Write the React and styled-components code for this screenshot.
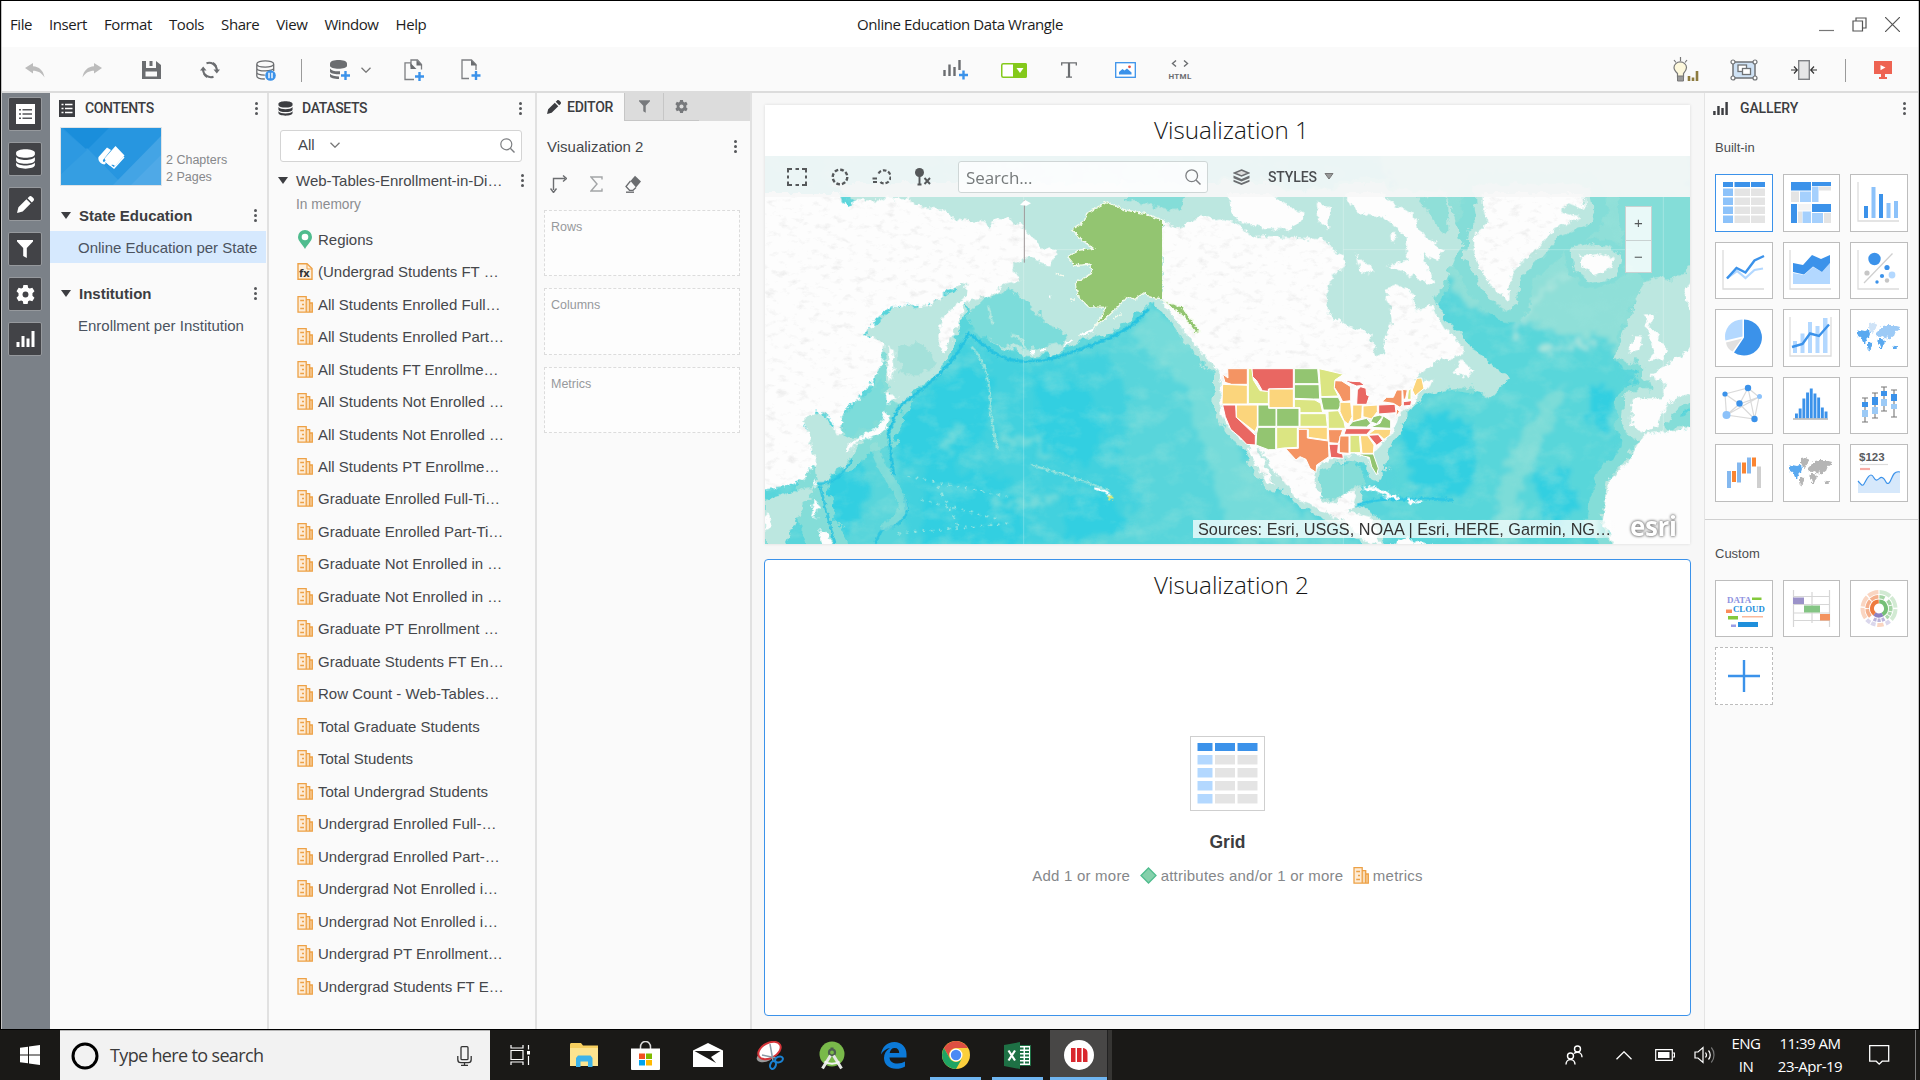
import React from "react";
import styled, { createGlobalStyle, css } from "styled-components";

const UI = `"Liberation Sans", Arial, sans-serif`;
const HEAD = `Roboto, "Liberation Sans", sans-serif`;
const SEGOE = `"Open Sans", "Noto Sans", sans-serif`;

const BLUE = "#3b92ea";
const LIGHT = "#b3d8ff";
const GREY = "#e4e4e4";
const INK = "#6b6d70";

const GlobalStyle = createGlobalStyle`
  *, *::before, *::after { box-sizing: border-box; }
  html, body { margin: 0; padding: 0; }
  body { width: 1920px; height: 1080px; overflow: hidden; background: #fafafa; }
  svg { display: block; flex: none; }
`;

/* ---------- shell ---------- */

const Screen = styled.div`
  width: 1920px;
  height: 1080px;
  display: flex;
  flex-direction: column;
  font-family: ${UI};
  font-size: 15px;
  color: #45474b;
`;

const AppWindow = styled.div`
  height: 1029px;
  display: flex;
  flex-direction: column;
  border: 1px solid #000;
  border-bottom: 0;
  box-shadow: inset 1px 0 0 #c4c4c4, inset -1px 0 0 #c4c4c4;
  padding: 0 1px;
  background: #fafafa;
`;

const MenuBar = styled.header`
  flex: none;
  height: 46px;
  display: grid;
  grid-template-columns: 1fr auto 1fr;
  align-items: center;
  background: #fff;
  font-family: ${SEGOE};
  font-size: 15px;
  letter-spacing: -0.42px;
  color: #1d1d1d;
`;

const MenuItems = styled.nav`
  display: flex;
  gap: 17px;
  padding-left: 8px;
`;

const WindowControls = styled.div`
  display: flex;
  justify-content: flex-end;
  align-items: center;
  gap: 18px;
  padding-right: 18px;
`;

const Toolbar = styled.div`
  flex: none;
  height: 46px;
  display: flex;
  align-items: center;
  padding-top: 2px;
  background: #fafafa;
  border-bottom: 2px solid #dcdcdc;
`;

const ToolGroup = styled.div`
  display: flex;
  align-items: center;
  height: 100%;
  margin-left: ${(p) => p.$ml || 0}px;
`;

const Tool = styled.div`
  width: ${(p) => p.$w}px;
  height: 30px;
  margin-left: ${(p) => p.$ml || 0}px;
  display: flex;
  flex-direction: column;
  align-items: center;
  justify-content: center;
`;

const ToolDivider = styled.div`
  width: 1px;
  height: 23px;
  margin-left: ${(p) => p.$ml}px;
  background: #9a9a9a;
`;

const HtmlLabel = styled.span`
  font-family: ${HEAD};
  font-weight: 700;
  font-size: 8px;
  line-height: 8px;
  letter-spacing: 0.3px;
  color: ${INK};
  margin-top: 6px;
`;

const Workspace = styled.div`
  flex: 1;
  min-height: 0;
  display: flex;
`;

const Rail = styled.aside`
  width: 48px;
  flex: none;
  background: #7b8188;
  padding: 4px 0 0 6px;
  display: flex;
  flex-direction: column;
  gap: 11px;
`;

const RailButton = styled.div`
  width: 34px;
  height: 34px;
  display: flex;
  align-items: center;
  justify-content: center;
  background: #424347;
  border: 1px solid #96999d;
  border-radius: 2px;
`;

/* ---------- side panels ---------- */

const Panel = styled.section`
  width: ${(p) => p.$w}px;
  flex: none;
  display: flex;
  flex-direction: column;
  background: #fafafa;
  border-right: 2px solid #e1e1e1;
`;

const PanelHead = styled.div`
  flex: none;
  height: 30px;
  display: flex;
  align-items: center;
  padding: 0 ${(p) => p.$pr}px 0 ${(p) => p.$pl ?? 9}px;
  font-family: ${HEAD};
  font-weight: 500;
  font-size: 14px;
  letter-spacing: ${(p) => p.$ls ?? -0.35}px;
  color: #3c3d41;
`;

const PanelTitle = styled.span`
  margin-left: ${(p) => p.$ml ?? 10}px;
  flex: 1;
`;

const DotsColumn = styled.div`
  width: 3px;
  display: flex;
  flex-direction: column;
  gap: 2px;
  i {
    width: 3px;
    height: 3px;
    border-radius: 50%;
    background: #55575a;
  }
`;
const Dots = () => (
  <DotsColumn>
    <i />
    <i />
    <i />
  </DotsColumn>
);

const Dossier = styled.div`
  height: 66px;
  margin-top: 4px;
  padding-left: 10px;
  display: flex;
`;

const Thumb = styled.div`
  width: 102px;
  height: 59px;
  border: 1px solid #dfe3e6;
`;

const DossierInfo = styled.div`
  margin: 25px 0 0 4px;
  font-size: 12.5px;
  line-height: 17px;
  color: #86888b;
`;

const ChapterRow = styled.div`
  height: 30px;
  margin-top: ${(p) => p.$mt || 0}px;
  padding: 0 10px 0 11px;
  display: flex;
  align-items: center;
  font-weight: 700;
  color: #3c3d41;
  span {
    flex: 1;
    margin-left: 8px;
  }
`;

const PageRow = styled.div`
  height: 32px;
  line-height: 34px;
  margin-top: 1px;
  padding-left: 28px;
  width: 216px;
  white-space: nowrap;
  color: #4b5360;
  background: ${(p) => (p.$active ? "#d6e9fe" : "transparent")};
`;

const Caret = styled.div`
  width: 0;
  height: 0;
  border: 5px solid transparent;
  border-top: 7px solid #3c3d41;
  border-bottom: 0;
`;

const SearchBox = styled.div`
  flex: none;
  width: 242px;
  height: 32px;
  margin: 7px 0 0 11px;
  padding: 0 6px 2px 17px;
  display: flex;
  align-items: center;
  background: #fff;
  border: 1px solid #d4d4d4;
  border-radius: 3px;
  span {
    margin: -2px 15px 0 0;
  }
`;

const Spring = styled.div`
  flex: 1;
`;

const DatasetRow = styled.div`
  margin-top: 6px;
  height: 24px;
  padding: 0 11px 0 9px;
  display: flex;
  align-items: center;
  span {
    flex: 1;
    margin-left: 8px;
    white-space: nowrap;
  }
`;

const DatasetNote = styled.div`
  height: 24px;
  line-height: 26px;
  padding-left: 27px;
  font-size: 13.75px;
  color: #8b8d90;
`;

const FieldList = styled.div`
  margin-top: 7px;
  padding-left: 28px;
`;

const FieldRow = styled.div`
  height: 32.48px;
  display: flex;
  align-items: center;
  white-space: nowrap;
  color: #45474b;
`;

const FieldIcon = styled.div`
  width: 16px;
  height: 20px;
  margin-right: 5px;
  display: flex;
  align-items: center;
  justify-content: center;
`;

/* ---------- editor ---------- */

const Tabs = styled.div`
  display: flex;
  height: 28px;
  background: #dcdcdc;
`;

const EditorTab = styled.div`
  width: 87px;
  padding-left: 10px;
  display: flex;
  align-items: center;
  background: #fafafa;
  font-family: ${HEAD};
  font-weight: 500;
  font-size: 14px;
  letter-spacing: -0.25px;
  color: #3c3d41;
  span {
    margin-left: 6px;
  }
`;

const IconTab = styled.div`
  width: ${(p) => p.$w}px;
  display: flex;
  align-items: center;
  justify-content: center;
  border-left: 1px solid #c6c6c6;
  border-bottom: 1px solid #c6c6c6;
`;

const VizName = styled.div`
  height: 30px;
  margin-top: 10px;
  padding: 0 13px 0 10px;
  display: flex;
  align-items: center;
  span {
    flex: 1;
  }
`;

const EditorTools = styled.div`
  height: 28px;
  margin-top: 9px;
  padding-left: 13px;
  display: flex;
  align-items: center;
  gap: 22.5px;
`;

const DropZones = styled.div`
  margin: 12px 0 0 7px;
  display: flex;
  flex-direction: column;
  gap: 12px;
`;

const DropZone = styled.div`
  width: 196px;
  height: 66.4px;
  padding: 8px 6px;
  background: #fdfdfd;
  border: 1px dashed #dcdcdc;
  font-size: 12.5px;
  line-height: 16px;
  color: #97999c;
`;

/* ---------- canvas ---------- */

const Canvas = styled.main`
  flex: 1;
  min-width: 0;
  padding: 12px 13px 0 12px;
  display: flex;
  flex-direction: column;
  gap: 15px;
  background: #f7f7f7;
`;

const VizCard = styled.article`
  flex: none;
  height: ${(p) => p.$h}px;
  background: #fff;
  display: flex;
  flex-direction: column;
  ${(p) =>
    p.$selected
      ? css`
          border: 1.5px solid ${BLUE};
          border-radius: 4px;
        `
      : css`
          margin: 0 1px;
          box-shadow: 0 0 3px rgba(0, 0, 0, 0.12);
        `}
`;

const VizTitle = styled.h2`
  flex: none;
  margin: 0;
  height: 51px;
  line-height: 50px;
  padding-left: 8px;
  text-align: center;
  font-family: ${SEGOE};
  font-weight: 300;
  font-size: 24.2px;
  color: #151515;
`;

const MapArea = styled.div`
  position: relative;
  height: 388px;
  overflow: hidden;
`;

const MapBar = styled.div`
  position: absolute;
  inset: 0 0 auto 0;
  height: 41px;
  padding-left: 22px;
  display: flex;
  align-items: center;
  background: rgba(247, 247, 247, 0.92);
`;

const MapTool = styled.div`
  width: 20px;
  margin-right: ${(p) => p.$mr}px;
  display: flex;
  justify-content: center;
`;

const MapSearch = styled.div`
  width: 250px;
  height: 32px;
  margin: 1px 25px 0 1px;
  padding: 0 6px 0 7px;
  display: flex;
  align-items: center;
  justify-content: space-between;
  background: rgba(255, 255, 255, 0.72);
  border: 1px solid #cfd6d6;
  border-radius: 3px;
  font-family: ${SEGOE};
  font-size: 17px;
  letter-spacing: -0.1px;
  color: #767a7b;
`;

const StylesLabel = styled.span`
  margin: 1px 7px 0 18px;
  font-family: ${HEAD};
  font-weight: 500;
  font-size: 14px;
  letter-spacing: -0.15px;
  color: #4b4d50;
`;

const ZoomControl = styled.div`
  position: absolute;
  left: 860px;
  top: 50px;
  width: 27px;
  height: 67px;
  border: 1px solid #c9d2d2;
  background: rgba(255, 255, 255, 0.82);
  div {
    height: 33px;
    line-height: 32px;
    text-align: center;
    font-size: 15px;
    color: #55595a;
  }
  div + div {
    border-top: 1px solid #c9d2d2;
  }
`;

const Credits = styled.div`
  position: absolute;
  left: 428px;
  top: 364px;
  width: 423px;
  height: 18px;
  padding-left: 5px;
  line-height: 19px;
  font-size: 16.25px;
  white-space: nowrap;
  background: linear-gradient(90deg, rgba(255, 255, 255, 0.74) 95%, rgba(255, 255, 255, 0.2));
  color: #333;
`;

const EsriMark = styled.div`
  position: absolute;
  left: 865px;
  top: 355px;
  display: flex;
  font-family: "Open Sans", sans-serif;
  font-weight: 700;
  font-size: 26px;
  line-height: 30px;
  letter-spacing: -0.4px;
  color: #fff;
  text-shadow: 0 0 3px #777, 0 0 3px #888, 0 0 1px #999;
`;

const EmptyState = styled.div`
  flex: 1;
  display: flex;
  flex-direction: column;
  align-items: center;
  padding-top: 125px;
`;

const EmptyIcon = styled.div`
  width: 75px;
  height: 75px;
  border: 1px solid #cfcfcf;
  padding: 6px;
`;

const EmptyTitle = styled.div`
  margin-top: 20px;
  font-weight: 700;
  font-size: 17.5px;
  line-height: 22px;
  color: #3c3d41;
`;

const EmptyHint = styled.div`
  margin-top: 11px;
  height: 22px;
  display: flex;
  align-items: center;
  letter-spacing: 0.22px;
  color: #85878a;
  svg {
    margin: 0 3.5px 0 10px;
  }
`;

/* ---------- gallery ---------- */

const Gallery = styled.section`
  width: 214px;
  flex: none;
  background: #fafafa;
  border-left: 1px solid #e4e4e4;
`;

const GalleryLabel = styled.div`
  height: ${(p) => p.$h}px;
  padding: ${(p) => p.$pt}px 0 0 10px;
  line-height: 18px;
  font-size: 13px;
  color: #4b4d50;
`;

const TileGrid = styled.div`
  padding-left: 10px;
  display: grid;
  grid-template-columns: repeat(3, 57.5px);
  grid-auto-rows: 57.5px;
  gap: 10px;
`;

const Tile = styled.div`
  border: 1px ${(p) => (p.$dashed ? "dashed" : "solid")} ${(p) => (p.$active ? BLUE : "#bdbdbd")};
  background: #fff;
  display: flex;
  align-items: center;
  justify-content: center;
`;

const GalleryRule = styled.div`
  height: 1px;
  margin-top: 17px;
  background: #d0d0d0;
`;

/* ---------- taskbar ---------- */

const Taskbar = styled.footer`
  flex: 1;
  display: flex;
  background: #1a1917;
  border-top: 1px solid #000;
  color: #fff;
`;

const StartButton = styled.div`
  width: 60px;
  display: flex;
  align-items: center;
  justify-content: center;
`;

const TaskSearch = styled.div`
  width: 430px;
  padding: 0 18px 0 11px;
  display: flex;
  align-items: center;
  background: #f2f2f2;
  border-top: 1px solid #b5b5b5;
  font-family: ${SEGOE};
  font-size: 18px;
  letter-spacing: -0.65px;
  color: #3a3a3a;
  span {
    flex: 1;
    margin: -2px 0 0 11px;
  }
`;

const TaskApp = styled.div`
  width: ${(p) => p.$w || 62}px;
  display: flex;
  align-items: center;
  justify-content: center;
  background: ${(p) => (p.$active ? "#484746" : "transparent")};
  box-shadow: ${(p) => (p.$open ? "inset 0 -3px 0 #6fb5f0" : "none")};
  margin-left: ${(p) => p.$ml || 0}px;
`;

const Stacked = styled.div`
  width: 5px;
  background: #363533;
  border-left: 1px solid #222;
`;

const Tray = styled.div`
  display: flex;
  align-items: center;
  font-family: ${SEGOE};
  font-size: 15px;
  line-height: 23px;
  letter-spacing: -0.5px;
  text-align: center;
`;

const TrayItem = styled.div`
  width: ${(p) => p.$w}px;
  margin-left: ${(p) => p.$ml || 0}px;
  display: flex;
  justify-content: center;
`;

const PeekEdge = styled.div`
  width: 5px;
  margin-left: 25px;
  height: 100%;
  border-left: 1px solid #7d7d7d;
`;

/* ---------- icons ---------- */

const Svg = ({ w, h, vb, children, ...rest }) => (
  <svg width={w} height={h} viewBox={vb || `0 0 ${w} ${h}`} fill="none" {...rest}>
    {children}
  </svg>
);

const Undo = ({ flip }) => (
  <Svg w={20} h={15}>
    <path
      transform={flip ? "matrix(-1 0 0 1 20 0)" : undefined}
      d="M0 5 8 0v3.2C14 3.5 18.500 7.500 19.500 14.500 16.500 9.800 13 7.800 8 7.800V10.500z"
      fill="#bcbcbc"
    />
  </Svg>
);

const Save = () => (
  <Svg w={19} h={18}>
    <path d="M0 0h4v7h10V0l5 4v14H0z" fill={INK} />
    <path d="M7.500 0h3v5h-3z" fill={INK} />
    <path d="M3.500 10.500h11.500v5H3.500z" fill="#fafafa" />
  </Svg>
);

const Refresh = () => (
  <Svg w={20} h={18}>
    <path d="M6.500 2.200A8 8 0 0 1 17 9M13.500 15.800A8 8 0 0 1 3 9" stroke={INK} strokeWidth="2" />
    <path d="M13.500 8.500h6.500l-3.200 4zM0 9.500h6.500L3.200 5.500z" fill={INK} />
    <path d="M3.500 12.500c.8 1.800 2 3 3.500 3.800M16.500 5.500C15.700 3.700 14.500 2.500 13 1.700" stroke={INK} strokeWidth="1.400" />
  </Svg>
);

const DbPause = () => (
  <Svg w={20} h={21}>
    <path
      d="M.8 4c0-4.200 16.900-4.200 16.900 0s-16.900 4.200-16.900 0v12c0 2 3 3 8 3M17.700 4v7M.8 8.200c0 3.600 16.900 3.600 16.900 0M.8 12.300c0 2 4 2.800 8 2.800"
      stroke={INK}
      strokeWidth="1.300"
    />
    <circle cx="14.500" cy="15.500" r="5.300" fill={BLUE} />
    <path d="M13 12.800v5.400M16 12.800v5.400" stroke="#fff" strokeWidth="1.400" />
  </Svg>
);

const Plus = ({ x, y }) => <path d={`M${x - 4.500} ${y}h9M${x} ${y - 4.500}v9`} stroke={BLUE} strokeWidth="2.400" />;

const DbShape = ({ fill, gap }) => (
  <>
    <path d="M0 3.200C0-.8 16-.8 16 3.200v1.300c0 4-16 4-16 0z" fill={fill} />
    <path d={`M0 6.800c2 3.400 14 3.400 16 0v2.700c0 4-16 4-16 0z`} fill={fill} />
    <path d={`M0 ${11.500 + gap}c2 3.400 14 3.400 16 0v2.200c0 4-16 4-16 0z`} fill={fill} />
  </>
);

const DbPlus = () => (
  <Svg w={21} h={21}>
    <path d="M0 3.500c0-4.600 17-4.600 17 0v2.300c0 4-17 4-17 0z" fill={INK} />
    <path d="M0 8.500c1.500 2.500 6 3 10 2.700v3C5 14.500 0 13.500 0 11.500zM0 13.800c1.500 2 5 2.700 9 2.700v2.500c-5 0-9-1-9-2.700z" fill={INK} />
    <Plus x={15.500} y={15.500} />
  </Svg>
);

const Chevron = ({ w = 10, h = 6, c = "#8a8a8a", s = 1.300, up }) => (
  <Svg w={w} h={h}>
    <path
      d={up ? `M.5 ${h - 0.700} ${w / 2} .8 ${w - 0.500} ${h - 0.700}` : `M.5 .7 ${w / 2} ${h - 0.800} ${w - 0.500} .7`}
      stroke={c}
      strokeWidth={s}
    />
  </Svg>
);

const CopyPlus = () => (
  <Svg w={21} h={23}>
    <path d="M7 3.800H1V20.500h9" stroke="#7d7f82" strokeWidth="1.300" />
    <path d="M7 7.500V1h6.500l4 4.500v5" stroke="#7d7f82" strokeWidth="1.300" />
    <path d="M6.500 4l6 6h-6zM12.500 1v5.500h5.500z" fill={INK} />
    <Plus x={15.500} y={17.500} />
  </Svg>
);

const DocPlus = () => (
  <Svg w={21} h={22}>
    <path d="M8 19.500H1V1h9.500l4.500 4.500V11" stroke="#7d7f82" strokeWidth="1.300" />
    <path d="M10 1v5.500h6z" fill={INK} />
    <Plus x={15} y={16.500} />
  </Svg>
);

const ChartPlus = () => (
  <Svg w={26} h={21}>
    <path d="M1.500 10v6M6.500 4.500V16M11.500 7v9M16.500 0v10" stroke={INK} strokeWidth="2.400" />
    <Plus x={20.500} y={15} />
  </Svg>
);

const FilterBox = () => (
  <Svg w={26} h={15}>
    <rect x=".75" y=".75" width="24.500" height="13.500" rx="1.500" fill="#fff" stroke="#84c91b" strokeWidth="1.500" />
    <path d="M12 0h12a2 2 0 0 1 2 2v11a2 2 0 0 1-2 2H12z" fill="#84c91b" />
    <path d="M15.500 5h7L19 10z" fill="#fff" />
  </Svg>
);

const TextTool = () => (
  <Svg w={16} h={16}>
    <path d="M.7 3.500V.8h14.600v2.700M5 15.200h6" stroke={INK} strokeWidth="1.300" />
    <path d="M8 1v14" stroke={INK} strokeWidth="2.200" />
  </Svg>
);

const ImageTool = () => (
  <Svg w={21} h={16}>
    <rect x=".7" y=".7" width="19.600" height="14.600" fill="#fff" stroke={BLUE} strokeWidth="1.300" />
    <path d="M4 12.500V10l3.500-3 2 1.500 2.500-2 4.500 4v2z" fill={BLUE} />
    <circle cx="14.500" cy="4.800" r="1.400" fill="#e8503f" />
  </Svg>
);

const CodeTool = () => (
  <Svg w={18} h={7}>
    <path d="M5 .5 1.500 3.500 5 6.500M13 .5l3.500 3-3.500 3" stroke={INK} strokeWidth="1.400" />
  </Svg>
);

const Bulb = () => (
  <Svg w={26} h={26}>
    <path d="M7.500 0v4M1 3l2 2.500M14 3l-2 2.500" stroke="#777" strokeWidth="1.200" />
    <path d="M4.500 20v-3.500C2.500 14.500 1 13 1 10.500a6.200 5.500 0 0 1 12.500 0c0 2.500-1.500 4-3 6V20z" fill="#fdf8dc" stroke="#777" strokeWidth="1.200" />
    <path d="M4.500 19h6v5h-6z" fill="#999" stroke="#777" />
    <path d="M16 19v5M20 20.500V24M24 14v10" stroke="#8d7b3f" strokeWidth="2.600" />
  </Svg>
);

const GroupTool = () => (
  <Svg w={28} h={22}>
    <rect x="3" y="3" width="22" height="16" fill="#cfe2f5" stroke="#6f7275" strokeWidth="1.500" />
    <rect x="8" y="6" width="8.500" height="6.500" fill="#fff" stroke="#6f7275" strokeWidth="1.300" />
    <rect x="12.500" y="9.500" width="8" height="6" fill="#fff" stroke="#6f7275" strokeWidth="1.300" />
    {[
      [3, 3],
      [25, 3],
      [3, 19],
      [25, 19],
    ].map(([x, y]) => (
      <circle key={`${x}-${y}`} cx={x} cy={y} r="2" fill="#fff" stroke="#6f7275" strokeWidth="1.200" />
    ))}
  </Svg>
);

const FitTool = () => (
  <Svg w={26} h={20}>
    <rect x="7.700" y=".7" width="10.600" height="18.600" fill="#e7e7e7" stroke="#808285" strokeWidth="1.400" />
    <path d="M0 10h6M3 6.500 6.300 10 3 13.500M26 10h-6M23 6.500 19.700 10 23 13.500" stroke="#333" strokeWidth="1.200" />
  </Svg>
);

const Present = () => (
  <Svg w={18} h={18}>
    <path d="M0 0h18v13h-7v3h2v2H5v-2h2v-3H0z" fill="#ee6352" />
    <path d="M6.500 4v5.200l5-2.600z" fill="#fff" />
  </Svg>
);

const ListIcon = ({ light }) =>
  light ? (
    <Svg w={19} h={20}>
      <path d="M0 0h19v20H0z" fill="#fff" />
      <path d="M3 5.800h2M3 10h2M3 14.200h2M6.500 5.800H16M6.500 10H16M6.500 14.200H16" stroke="#55565a" strokeWidth="1.400" />
    </Svg>
  ) : (
    <Svg w={16} h={17}>
      <path d="M0 0h16v17H0z" fill="#3c3d41" />
      <path d="M2.500 4.500h2M2.500 8.500h2M2.500 12.500h2M6 4.500h7.500M6 8.500h7.500M6 12.500h7.500" stroke="#fff" strokeWidth="1.500" />
    </Svg>
  );

const Db = ({ w, h, fill }) => (
  <Svg w={w} h={h} vb="0 0 16 17">
    <DbShape fill={fill} gap={0} />
  </Svg>
);

const Pencil = ({ s, fill }) => (
  <Svg w={s} h={s} vb="0 0 18 18">
    <path d="M0 18l1.500-6L10 3.500 14.500 8 6 16.500zM11.200 2.300 13 .5c.8-.8 1.900-.6 2.800.2l1.500 1.500c.8.9 1 2 .2 2.800l-1.800 1.800z" fill={fill} />
  </Svg>
);

const Funnel = ({ w, h, fill }) => (
  <Svg w={w} h={h} vb="0 0 16 18">
    <path d="M0 0h16v1.500L9.800 8v10l-3.600-2V8L0 1.500z" fill={fill} />
  </Svg>
);

const Gear = ({ s, fill, hole }) => (
  <Svg w={s} h={s} vb="0 0 18 18">
    <path
      d="M7 0h4l.5 2.500 1.500.9 2.500-.9 2 3.500-1.900 1.700v2.600l1.900 1.700-2 3.500-2.500-.9-1.500.9L11 18H7l-.5-2.500-1.500-.9-2.500.9-2-3.500 1.900-1.700V7.700L.5 6l2-3.500 2.500.9 1.500-.9z"
      fill={fill}
    />
    <circle cx="9" cy="9" r="2.800" fill={hole} />
  </Svg>
);

const Bars = ({ w, h, fill }) => (
  <Svg w={w} h={h} vb="0 0 18 16">
    <path d="M0 11h3v5H0zM5 5h3v11H5zM10 7.500h3V16h-3zM15 0h3v16h-3z" fill={fill} />
  </Svg>
);

const Magnifier = ({ s = 15, c = "#7d7f82" }) => (
  <Svg w={s} h={s} vb="0 0 15 15">
    <circle cx="6.300" cy="6.300" r="5.500" stroke={c} strokeWidth="1.200" />
    <path d="M10.300 10.300 14.500 14.500" stroke={c} strokeWidth="1.400" />
  </Svg>
);

const Books = () => (
  <Svg w={100} h={57} vb="0 0 100 57" preserveAspectRatio="none">
    <path d="M0 0h100v57H0z" fill="#2796e0" />
    <path d="M2 0h46L26 22z" fill="#1a8edb" />
    <path d="M0 57V46L26 20 62 57z" fill="#3ba0e3" opacity=".75" />
    <path d="M0 0l26 22L0 46z" fill="#2d99e1" />
    <path d="M52 57 100 8v49z" fill="#43a4e5" />
    <path d="M70 57l30-30v30z" fill="#58aee8" opacity=".6" />
    <path d="M37.500 29 46 19.500l4 2.500-8 10c-.5 1.500.5 2.300 1.800 1.800l1.200 1.200-1.500 1.500C40 36.500 36.500 32.500 37.500 29z" fill="#fff" />
    <path d="M43.500 30.500 54.500 18l9 9.500-9.500 10.500c-1.500-2-4-1.500-5.500-.5l-3-3z" fill="#fff" />
    <path d="M44 33l9 7 10-11" stroke="#fff" strokeWidth="1.500" />
  </Svg>
);

const PinIcon = () => (
  <Svg w={14} h={19}>
    <path d="M7 0a7 7 0 0 1 7 7c0 4-4.500 7.500-7 12C4.500 14.500 0 11 0 7a7 7 0 0 1 7-7z" fill="#4fbc8e" />
    <circle cx="7" cy="7" r="3.300" fill="#fff" />
  </Svg>
);

const FxIcon = () => (
  <Svg w={16} h={17}>
    <path d="M1 .8h9l5 4.700v10.700H1z" fill="#fdf0df" stroke="#eda146" strokeWidth="1.400" />
    <path d="M10 1v5h5" stroke="#eda146" />
    <text x="2" y="13.800" fontFamily="Open Sans, sans-serif" fontWeight="700" fontSize="11" fill="#333">
      fx
    </text>
  </Svg>
);

const MetricIcon = () => (
  <Svg w={16} h={17}>
    <path d="M1 .8h8v15.400H1z" fill="#fdebd5" />
    <path d="M9 3.500h4v12.700H9z" fill="#f9dcb8" />
    <path d="M13 7h2.500v9.200H13z" fill="#f7cf9f" />
    <path d="M1 .7h8.200v15.500H1zM9.200 3.700h3.500v12.500H9M12.700 7h2.600v9.200h-3" stroke="#eda146" strokeWidth="1.300" />
    <path d="M3.200 4.500H7M3.200 12.500H7M5 8.500h2" stroke="#eda146" strokeWidth="1.300" />
  </Svg>
);

const SwapIcon = () => (
  <Svg w={17} h={18}>
    <path d="M3.500 15V3.500H15M.5 13.500l3 4 3-4M13 .5l3.500 3-3.500 3" stroke={INK} strokeWidth="1.400" />
  </Svg>
);

const Sigma = () => (
  <Svg w={13} h={16}>
    <path d="M12 3.500V1H1l6 7-6 7h11v-2.500" stroke="#a3a5a7" strokeWidth="1.400" />
  </Svg>
);

const Eraser = () => (
  <Svg w={17} h={18}>
    <path d="M10 .8 16 6.500 11 12.500 5.500 6z" fill={INK} />
    <path d="M5.500 6 1 11.500l3.500 3.800H8l3-2.800" stroke={INK} strokeWidth="1.300" />
    <path d="M1 17.200h8" stroke={INK} strokeWidth="1.400" />
  </Svg>
);

const Layers = () => (
  <Svg w={17} h={16}>
    <path d="M8.500 1l7 3-7 3-7-3z" fill="#ddd" stroke="#6b6d70" strokeWidth="1.500" />
    <path d="M.5 6.500l8 3.500 8-3.500v2.800l-8 3.300-8-3.300zM.5 10.700l8 3.300 8-3.300v2l-8 3.300-8-3.300z" fill="#6b6d70" />
  </Svg>
);

const Diamond = () => (
  <Svg w={17} h={17}>
    <path d="M8.500 1l7.500 7.500L8.500 16 1 8.500z" fill="#85d0ab" stroke="#4fbc8e" strokeWidth="1.300" />
  </Svg>
);

/* ---------- gallery thumbnails ---------- */

const axes = <path d="M1 1v39h41" stroke="#dcdcdc" strokeWidth="1.300" />;
const G = ({ children }) => (
  <Svg w={44} h={43}>
    {children}
  </Svg>
);

const cols = [
  [1, 10],
  [12.500, 15.500],
  [29, 14],
];

const GridThumb = () => (
  <G>
    {cols.map(([x, w], c) => (
      <React.Fragment key={x}>
        <path d={`M${x} 1h${w}v5h-${w}z`} fill={BLUE} />
        {[7.500, 16.500, 25.500, 34.500].map((y) => (
          <path key={y} d={`M${x} ${y}h${w}v7.500h-${w}z`} fill={c ? GREY : "#8cc2fa"} />
        ))}
      </React.Fragment>
    ))}
  </G>
);

const HeatThumb = () => (
  <G>
    <path d="M2 1h20v8.500H2zM23 1h19v4H23zM2 23h6v19H2zM23 23h19v8H23z" fill={BLUE} />
    <path d="M11 10.500h11v10.500H11zM23 5.500h6.500V21H23zM13.500 30.500H22V42h-8.500zM23 32h11v10H23z" fill="#a5d0fd" />
    <path d="M2 10.500h8v10.500H2zM30 5.500h12v4H30zM9 30.500h4V42H9zM35 32h7v10h-7z" fill={GREY} />
    <path d="M9 23h13v6.500H9z" fill="#f4f4f4" />
  </G>
);

const BarThumb = () => (
  <G>
    {axes}
    <path d="M7 25h4v12H7zM22 13h4v24h-4z" fill={BLUE} />
    <path d="M14.500 6h4v31h-4zM29.500 22h4v15h-4zM37 20h4v17h-4z" fill="#8cc2fa" />
  </G>
);

const LineThumb = () => (
  <G>
    {axes}
    <path d="M5 29l10-7 8.500 7 9-8 8.500-1.500" stroke={LIGHT} strokeWidth="2.200" />
    <path d="M5 29.500 14.500 19l9 4.500 9-12L42 7" stroke={BLUE} strokeWidth="2.400" />
  </G>
);

const AreaThumb = () => (
  <G>
    {axes}
    <path d="M4 24l11 2 9-8 9 5 8-9v21H4z" fill={LIGHT} />
    <path d="M4 14l10 2 9-10 9 4 9-4v8l-8 9-9-5.500L15 25.500 4 23z" fill={BLUE} />
  </G>
);

const BubbleThumb = () => (
  <G>
    {axes}
    <path d="M7 34 35.500 4.500" stroke="#cfcfcf" strokeWidth="1.300" />
    <circle cx="17.500" cy="10" r="6.200" fill={BLUE} />
    <circle cx="30" cy="18.500" r="2.600" fill={BLUE} />
    <circle cx="25" cy="27" r="2.100" fill={BLUE} />
    <circle cx="20" cy="33" r="1.700" fill={BLUE} />
    <circle cx="35" cy="26" r="3.400" fill={LIGHT} />
    <circle cx="10" cy="24" r="2.600" fill="#c6c6c6" />
    <circle cx="30" cy="31.500" r="2.200" fill="#c6c6c6" />
  </G>
);

const PieThumb = () => (
  <G>
    <path d="M22 21.500V3.500A18 18 0 1 1 12 36.500z" fill={BLUE} />
    <path d="M20.500 20.500V3.500A17 17 0 0 0 3.500 24.500z" fill={LIGHT} />
    <path d="M20 22.500 4 26.500c.5 4 3 7.500 6.500 9z" fill="#e0e0e0" />
  </G>
);

const ComboThumb = () => (
  <G>
    <path d="M1 1v39h41V1" stroke="#dcdcdc" strokeWidth="1.300" />
    <path d="M4 25h4v12H4zM11.500 17.500h4V37h-4zM19 6h4v31h-4zM26.500 10h4v27h-4zM34 2h4.500v35H34z" fill={LIGHT} />
    <path d="M3 31l10.500-3L21 17.500l9 2.500 10-11.500" stroke={BLUE} strokeWidth="2.400" />
  </G>
);

const worldParts = {
  na: "M0 10l3-2 5 1 4-1 1 4-1 3-3 3-1 4-2-2-2-4-4-3z",
  green: "M12 1l5-1 3 2-1 4-3 5-2-1-2-4z",
  eurasia: "M20 10l3-3 3-3 5-1 5 0 7 2-1 3-3 1-2 5-3 1 0 3-2-1-2-3-1 4-3-4-4 1-3-1-1-2z",
  africa: "M21 17l4 0 3 2-1 3-2 4-2 0-1-4-2-2z",
  sa: "M11 20l4 1 0 3-2 3-1 3-1-5z",
  aus: "M36 25l3-2 2 3-2 1-3 0z",
};
const WorldThumb = ({ grey }) => (
  <G>
    <g transform="translate(0 6)" filter="url(#rough-small)">
      <path d={worldParts.na} fill="#5aa9f0" />
      <path d={worldParts.green} fill={grey ? "#b5b5b5" : "#cfe3f7"} />
      <path d={worldParts.eurasia} fill={grey ? "#b5b5b5" : "#9ccaf6"} />
      <path d={worldParts.africa} fill={grey ? "#b5b5b5" : "#5aa9f0"} />
      <path d={worldParts.sa} fill={grey ? "#b5b5b5" : "#5aa9f0"} />
      <path d={worldParts.aus} fill={grey ? "#b5b5b5" : "#5aa9f0"} />
    </g>
  </G>
);

const NetworkThumb = () => (
  <G>
    <path d="M3 10 26 4l11 9-19.500 7L3 10l1.500 21 28 4L26 4l-8.500 16-13 11M37 13l-4.500 22-15-15M4.500 31 37 13" stroke="#dadada" strokeWidth="1.200" />
    <circle cx="3" cy="10" r="2.600" fill={BLUE} />
    <circle cx="26" cy="4" r="3.200" fill={BLUE} />
    <circle cx="17.500" cy="19.500" r="3.200" fill={BLUE} />
    <circle cx="32.500" cy="35" r="3.200" fill={BLUE} />
    <circle cx="37.500" cy="12.500" r="2.500" fill="#8cc2fa" />
    <circle cx="4.500" cy="31" r="4" fill="#8cc2fa" />
  </G>
);

const HistThumb = () => (
  <G>
    {[5, 10, 20, 26, 30, 25, 21, 11, 7].map((h, i) => (
      <path key={i} d={`M${6 + i * 3.700} ${34.500 - h}h2.900v${h}h-2.900z`} fill={BLUE} />
    ))}
    <path d="M4 35h35" stroke="#b5b5b5" strokeWidth="1.300" />
  </G>
);

const BoxThumb = () => (
  <G>
    {[
      [8, 14, 38, 18, 5, 26, 7],
      [18, 9, 34, 13, 8, 23, 7],
      [27, 3, 27, 7, 5, 15, 7],
      [37, 6, 33, 10, 7, 20, 5],
    ].map(([x, a, b, y1, h1, y2, h2]) => (
      <React.Fragment key={x}>
        <path d={`M${x} ${a}V${b}M${x - 3} ${a}h6M${x - 3} ${b}h6`} stroke="#777" strokeWidth="1.100" />
        <path d={`M${x - 3} ${y1}h6v${h1}h-6z`} fill={BLUE} />
        <path d={`M${x - 3} ${y2}h6v${h2}h-6z`} fill="#9ccaf6" />
      </React.Fragment>
    ))}
  </G>
);

const WaterThumb = () => (
  <G>
    <path d="M5 20h4v17H5zM15 11.500h4v20h-4zM25 6.500h4v16h-4z" fill="#84b8ef" />
    <path d="M10 20h4v11h-4zM20 11.500h4v11h-4zM30 6.500h4v9h-4z" fill="#fb8532" />
    <path d="M35 15.500h4V37h-4z" fill="#cfcfcf" />
  </G>
);

const KpiThumb = () => (
  <G>
    <text x="2" y="10" fontFamily="Liberation Sans, Arial, sans-serif" fontWeight="700" fontSize="11.500" fill="#5a5c5f">
      $123
    </text>
    <path d="M3 13.500h28" stroke="#dcdcdc" strokeWidth="1.200" />
    <path d="M3 18h10" stroke="#f7aca5" strokeWidth="2.200" />
    <path d="M1 30c3 3 4 6 6 3s4-9 7-9 3 6 6 5 3-4 6-2 3 7 6 5 3-13 11-11v21H1z" fill="#d6e8fb" />
    <path d="M1 30c3 3 4 6 6 3s4-9 7-9 3 6 6 5 3-4 6-2 3 7 6 5 3-13 11-11" stroke={BLUE} strokeWidth="1.200" />
  </G>
);

const CloudThumb = () => (
  <Svg w={52} h={43} vb="-4 0 52 43">
    <g fontFamily="Liberation Serif, Times New Roman, serif" fontWeight="700">
      <text x="5" y="16" fill="#8e93e0" fontSize="9">
        DATA
      </text>
      <text x="11" y="25" fill="#1f8fdb" fontSize="8.800">
        CLOUD
      </text>
    </g>
    <path d="M30 10.500H39.500v2.500H30zM6 29h10v3.500H6z" fill="#84c93c" />
    <path d="M4 22.500h6v3.500H4z" fill="#fb8c5a" />
    <path d="M20 29h21v1.500H20z" fill="#fbb89a" />
    <path d="M16 35h20v5H16z" fill="#1f8fdb" />
    <path d="M9 37.500h5v2.500H9z" fill="#9a9ee6" />
  </Svg>
);

const GanttThumb = () => (
  <G>
    <path d="M4.500 3v37M40.500 3v37M23 5v31M4 9.500h37M4 17.500h37M4 26h37M4 33.500h37" stroke="#d6d6d6" strokeWidth="1.200" />
    <path d="M4 10.500h11v6.500H4z" fill="#9b92c9" />
    <path d="M15 18.500h16v7H15z" fill="#84c584" />
    <path d="M31 27h10v6.500H31z" fill="#f3935f" />
  </G>
);

const ring = (r, w, from, to, color, o) => {
  const p = (a) => [22 + r * Math.sin((a * Math.PI) / 180), 21.500 - r * Math.cos((a * Math.PI) / 180)];
  const [x1, y1] = p(from);
  const [x2, y2] = p(to);
  return (
    <path
      key={`${r}-${from}`}
      d={`M${x1} ${y1}A${r} ${r} 0 ${to - from > 180 ? 1 : 0} 1 ${x2} ${y2}`}
      stroke={color}
      strokeWidth={w}
      opacity={o}
    />
  );
};
const SunThumb = () => (
  <G>
    {ring(7, 4, 2, 150, "#74bf76", 1)}
    {ring(7, 4, 150, 220, "#8d83c4", 1)}
    {ring(7, 4, 220, 358, "#ee7b3f", 1)}
    {[0, 45, 75].map((a) => ring(11.800, 3.600, a + 2, a + 28, "#74bf76", 0.650))}
    {[105, 125].map((a) => ring(11.800, 3.600, a + 2, a + 18, "#74bf76", 0.600))}
    {[150, 170, 190].map((a) => ring(11.800, 3.600, a + 2, a + 17, "#8d83c4", 0.600))}
    {[225, 270, 315].map((a) => ring(11.800, 3.600, a + 2, a + 42, "#ee7b3f", 0.600))}
    {[0, 45, 90].map((a) => ring(16.500, 4, a + 2, a + 42, "#74bf76", 0.320))}
    {[138, 190, 210].map((a) => ring(16.500, 4, a + 2, a + 18, "#8d83c4", 0.320))}
    {ring(16.500, 4, 164, 186, "#ee7b3f", 0.320)}
    {[232, 275, 318].map((a) => ring(16.500, 4, a + 2, a + 40, "#ee7b3f", 0.320))}
  </G>
);

const BigPlus = () => (
  <Svg w={34} h={34}>
    <path d="M1 17h32M17 1v32" stroke={BLUE} strokeWidth="2.400" />
  </Svg>
);

const BigGrid = () => (
  <Svg w={61} h={61}>
    {[
      [0.500, 15],
      [18, 20],
      [40.500, 20],
    ].map(([x, w], c) => (
      <React.Fragment key={x}>
        <path d={`M${x} 0h${w}v8h-${w}z`} fill={BLUE} />
        {[12, 25, 38, 51].map((y) => (
          <path key={y} d={`M${x} ${y}h${w}v9.500h-${w}z`} fill={c ? GREY : LIGHT} />
        ))}
      </React.Fragment>
    ))}
  </Svg>
);

const BUILT_IN = [
  GridThumb,
  HeatThumb,
  BarThumb,
  LineThumb,
  AreaThumb,
  BubbleThumb,
  PieThumb,
  ComboThumb,
  WorldThumb,
  NetworkThumb,
  HistThumb,
  BoxThumb,
  WaterThumb,
  () => <WorldThumb grey />,
  KpiThumb,
];

/* ---------- map ---------- */

const RED = "#e96762";
const ORANGE = "#f49463";
const YELLOW = "#fbd57c";
const LIME = "#dbe582";
const GREEN = "#93c571";

const STATES = [
  [ORANGE, "83,656 142,656 142,703 95,703 75,697 68,672 84,684"],
  [YELLOW, "68,703 142,706 142,762 66,762"],
  [RED, "68,765 107,765 109,802 166,856 166,885 140,883 120,862 92,838 76,800"],
  [YELLOW, "109,765 172,765 172,828 165,845 109,802"],
  [LIME, "145,656 156,656 160,690 180,722 205,724 205,761 145,761"],
  [RED, "156,656 280,656 280,715 205,717 205,724 187,722 170,692 158,680"],
  [YELLOW, "207,717 280,717 280,773 207,773"],
  [GREEN, "174,765 206,765 206,775 228,775 228,829 174,829"],
  [GREEN, "230,775 297,775 297,829 230,829"],
  [GREEN, "174,832 227,832 227,899 205,899 168,885 170,850"],
  [LIME, "230,832 292,832 292,892 250,894 230,897"],
  [GREEN, "283,656 353,656 357,701 283,701"],
  [GREEN, "283,704 357,704 359,747 340,747 283,745"],
  [LIME, "283,748 345,750 362,760 368,788 300,788 300,773 283,773"],
  [LIME, "300,791 378,791 382,829 300,829"],
  [YELLOW, "295,832 382,832 382,870 325,862 325,838 295,838"],
  [ORANGE, "295,838 322,838 322,864 385,873 387,920 350,945 348,967 330,955 318,928 300,920 288,930 257,896 295,895"],
  [LIME, "357,656 375,660 430,673 405,690 403,715 415,738 363,740 360,700"],
  [GREEN, "362,742 415,742 424,762 415,780 370,780"],
  [LIME, "384,784 415,782 432,815 436,835 385,835"],
  [ORANGE, "385,839 428,839 415,880 387,878"],
  [RED, "387,883 415,883 413,908 428,912 430,925 392,922"],
  [ORANGE, "405,692 425,693 452,710 452,752 428,755 418,735 403,712"],
  [YELLOW, "420,757 452,757 456,800 445,823 432,812 420,785"],
  [RED, "482,710 498,715 500,735 508,738 500,763 470,763 472,720"],
  [RED, "430,690 455,694 480,695 494,706 470,708 455,702"],
  [YELLOW, "458,765 487,765 485,805 458,815"],
  [YELLOW, "489,768 532,765 532,785 515,807 489,800"],
  [GREEN, "445,830 458,815 500,805 512,820 500,831"],
  [RED, "438,836 515,836 500,853 432,853"],
  [ORANGE, "420,858 447,858 447,910 418,908 418,880"],
  [LIME, "450,856 478,856 482,908 450,908"],
  [YELLOW, "481,857 503,857 522,885 520,910 486,910"],
  [GREEN, "475,912 520,912 535,955 530,975 515,950 508,922 490,918"],
  [RED, "505,856 535,854 548,872 530,886"],
  [YELLOW, "505,853 525,838 573,838 570,855 552,868 535,852"],
  [GREEN, "510,832 540,820 550,798 572,812 572,835"],
  [GREEN, "512,815 520,800 540,795 548,800 530,822"],
  [RED, "536,765 585,763 588,788 536,792"],
  [ORANGE, "546,755 560,742 580,742 590,720 606,720 606,765 600,772 580,760"],
  [ORANGE, "608,718 622,720 617,745 610,750"],
  [LIME, "625,722 633,715 633,748 622,748"],
  [YELLOW, "637,720 650,685 665,684 672,715 645,738"],
  [RED, "610,755 635,752 632,766 610,768"],
  [ORANGE, "590,775 598,785 588,800"],
];

const ASIA =
  "M-20 130H228L245 170 270 150 340 152 360 143 430 145 480 175 540 180 562 205 660 215 672 232 690 205 740 210 780 235 800 262 838 298 850 288 878 306 850 350 790 318 740 345 765 390 720 400 680 435 600 455 590 500 560 560 537 615 520 560 530 505 600 440 608 398 570 412 540 425 500 465 380 465 330 510 300 555 355 575 350 640 320 700 270 750 230 790 235 852 215 852 190 795 150 785 115 810 135 870 150 940 120 985 70 1010 -20 1020z";
const NORTH_AMERICA =
  "M-115 210L-60 235 -20 205 20 195 40 215 70 210 110 220 160 262 200 258 300 262 380 270 400 300 430 320 440 350 400 370 380 440 385 490 430 520 510 550 530 615 552 612 555 560 575 520 570 470 555 420 600 405 640 430 645 480 690 465 730 530 790 590 790 612 700 640 640 690 700 690 685 712 660 725 640 760 600 790 575 850 540 885 518 915 532 975 515 945 500 915 430 917 400 930 360 940 345 970 350 1020 370 1055 410 1060 430 1030 467 1025 450 1085 510 1100 540 1182 510 1182 440 1120 370 1085 290 1045 260 1005 220 960 185 905 165 890 190 930 222 1005 205 1000 160 930 145 885 100 850 70 800 60 760 62 690 60 665 0 600 -60 530 -115 450z";
const ISLANDS_NA =
  "M80 130H210L312 195 300 215 280 236 200 238 120 215 95 185zM350 155L390 172 383 240 355 215zM435 130H540L640 195 662 250 733 300 712 332 665 312 695 380 700 405 640 380 560 345 622 332 620 262 560 205 470 185zM468 315L522 360 482 375zM568 252h20v22h-18zM785 630L820 662 808 682 760 670z";
const GREENLAND =
  "M850 130H1150L1155 175 1105 160 1085 185 1142 203 1060 240 1000 310 950 350 930 392 928 452 890 430 850 372 822 320 828 250 860 222 852 180z";
const EUROPE =
  "M1140 310L1160 320 1200 310 1245 330 1220 360 1180 376 1150 352zM1335 490L1362 490 1350 530 1380 565 1404 600 1385 625 1345 632 1365 600 1345 560zM1300 558L1326 560 1320 600 1288 612zM1450 420L1480 380 1480 500zM1480 585L1440 620 1400 645 1348 675 1395 700 1385 745 1298 745 1292 830 1330 848 1375 822 1390 785 1430 742 1480 730z";
const AFRICA = "M1480 835L1350 850 1325 860 1290 930 1228 990 1215 1060 1208 1110 1245 1190 1480 1190z";
const JAPAN =
  "M370 585L382 600 388 655 374 695 370 640zM365 725L402 744 368 762zM358 785L372 800 362 840 325 858 285 870 262 888 250 912 243 885 300 852 345 830zM150 985L152 1000 143 1012zM145 1055L160 1062 150 1100 165 1110 140 1100zM0 1085L18 1110 10 1140 0 1140zM160 1140L190 1150 205 1190 175 1190z";

const USMap = () => (
  <svg width="925" height="388" viewBox="0 18 2775 1164" preserveAspectRatio="none" fill="none">
    <defs>
      <filter id="rough" x="-5%" y="-5%" width="110%" height="110%">
        <feTurbulence type="fractalNoise" baseFrequency="0.09" numOctaves="3" seed="4" />
        <feDisplacementMap in="SourceGraphic" scale="13" xChannelSelector="R" yChannelSelector="G" />
      </filter>
      <filter id="coast" x="-5%" y="-5%" width="110%" height="110%">
        <feTurbulence type="fractalNoise" baseFrequency="0.05" numOctaves="4" seed="4" />
        <feDisplacementMap in="SourceGraphic" scale="26" xChannelSelector="R" yChannelSelector="G" />
      </filter>
      <filter id="rough-wide" x="-5%" y="-5%" width="110%" height="110%">
        <feTurbulence type="fractalNoise" baseFrequency="0.03" numOctaves="4" seed="9" />
        <feDisplacementMap in="SourceGraphic" scale="38" xChannelSelector="R" yChannelSelector="G" />
      </filter>
      <filter id="soft" x="-20%" y="-20%" width="140%" height="140%">
        <feTurbulence type="fractalNoise" baseFrequency="0.04" numOctaves="4" seed="2" result="n" />
        <feDisplacementMap in="SourceGraphic" in2="n" scale="70" xChannelSelector="R" yChannelSelector="G" />
        <feGaussianBlur stdDeviation="7" />
      </filter>
      <filter id="rough-small" x="-10%" y="-10%" width="120%" height="120%">
        <feTurbulence type="fractalNoise" baseFrequency="0.4" numOctaves="2" seed="3" />
        <feDisplacementMap in="SourceGraphic" scale="4" xChannelSelector="R" yChannelSelector="G" />
      </filter>
      <filter id="grain" x="0" y="0" width="100%" height="100%" colorInterpolationFilters="sRGB">
        <feTurbulence type="fractalNoise" baseFrequency="0.012 0.018" numOctaves="5" seed="12" />
        <feColorMatrix values="0 0 0 0 0.6  0 0 0 0 0.89  0 0 0 0 0.86  2.6 0 0 0 -1.2" />
      </filter>
      <filter id="relief" x="0" y="0" width="100%" height="100%" colorInterpolationFilters="sRGB">
        <feTurbulence type="fractalNoise" baseFrequency="0.03 0.05" numOctaves="5" seed="21" />
        <feColorMatrix values="0 0 0 0 0.6  0 0 0 0 0.6  0 0 0 0 0.6  1.6 0 0 0 -0.88" />
        <feComposite in2="SourceGraphic" operator="in" />
      </filter>
    </defs>

    <rect y="18" width="2775" height="1164" fill="#58d5db" />

    {/* ocean depths */}
    <g filter="url(#soft)">
      <path d="M1150 470L1410 640 1420 900 1560 1060 1800 1182H1400L1350 1000 1250 700 1100 560z" fill="#74dbda" />
      <path d="M600 560L780 650 1020 600 1100 750 1060 950 1150 1050 900 1182H430L400 1000 380 860 420 780z" fill="#43d1de" />
      <path d="M600 650L690 700 660 850 560 960 400 930 400 800zM820 680l130 20 80 130-60 120-170-60zM480 950l250 30 60 202H470zM900 1020l130 20 70 100-200 40zM170 1010l110-90 30 130-60 100-50-20z" fill="#33cfe1" />
      <path d="M1830 0H2775V560L2600 620 2200 600 2080 440z" fill="#8fdfd8" />
      <path d="M2070 470L2200 480 2400 560 2520 560 2600 700 2580 850 2500 1000 2480 1182H1900L1880 900 2000 780z" fill="#58d6da" />
      <path d="M1900 850L2010 780 2120 820 2140 950 2100 1040 1950 1040zM2300 980l100-30 50 120-90 60zM2480 700l70 30-20 130-60-40z" fill="#33cfe1" />
      <path d="M2190 1182L2200 1020 2250 880 2330 760 2400 700 2350 850 2270 1000 2260 1182z" fill="#7bdcd8" />
      <path d="M2250 560C2270 500 2330 400 2400 370M2310 600L2500 580" stroke="#a8e4dc" strokeWidth="16" />
    </g>
    <rect y="18" width="2775" height="1164" filter="url(#grain)" opacity=".38" />

    {/* continental shelves */}
    <g filter="url(#rough-wide)">
      <g stroke="#84ddd8" strokeWidth="90" strokeLinejoin="round">
        <path d={JAPAN} />
        <g transform="translate(1305 0)">
          <path d={ISLANDS_NA} />
          <path d={EUROPE} />
          <path d={GREENLAND} strokeWidth="130" />
          <path d={AFRICA} />
        </g>
      </g>
      <path d="M200 100H1400L1390 330 1320 570 1250 500 1160 460 1090 520 985 560 860 610 780 615 700 590 620 530 600 440z" fill="#bce7e0" />
      <path d="M600 490L660 450 740 412 800 470 860 530 915 550 890 585 800 598 700 585 620 535z" fill="#7cdcda" />
      <path d="M300 550L380 470 500 460 600 400 600 470 545 640 500 690 410 760 370 750 360 600z" fill="#bce7e0" />
      <path d="M400 580L470 580 510 630 490 670 400 670z" fill="#a4e1da" />
      <path d="M110 790L160 780 240 860 300 870 240 950 165 1000 0 1050V1182H60L150 1000 130 860z" fill="#bce7e0" />
      <path d="M225 800L290 750 350 690 370 760 350 815 270 850 235 860z" fill="#7cdcda" />
      <g transform="translate(1305 0)" stroke="#bce7e0" strokeLinejoin="round">
        <path d={NORTH_AMERICA} strokeWidth="34" />
        <path d={ISLANDS_NA} strokeWidth="60" />
        <path d={GREENLAND} strokeWidth="55" />
        <path d={EUROPE} strokeWidth="50" />
        <path d={AFRICA} strokeWidth="16" />
        <path d="M0 120H740L790 290 700 440 760 560 850 620 925 680 870 745 800 700 680 730 600 810 570 880 560 960 540 960 480 800 370 600 300 300 0 250z" fill="#bce7e0" stroke="none" />
        <path d="M1330 400L1480 360V600L1330 640 1240 620z" fill="#bce7e0" stroke="none" />
        <path d="M650 141H745V240L720 250 690 190z" fill="#8fdfd8" stroke="none" />
        <path d="M1250 130H1480V330L1420 385 1330 390 1270 320z" fill="#84ddd8" stroke="none" />
        <path d="M355 960L470 930 500 1000 460 1020 400 1050 360 1040z" fill="#84ddd8" stroke="none" />
      </g>
      <path d="M1080 100H1290L1240 180 1150 165 1080 150z" fill="#84ddd8" />
    </g>

    {/* trenches and ridges */}
    <g filter="url(#rough)" strokeLinecap="round" strokeLinejoin="round">
      <path
        d="M1150 478C1110 520 1080 545 1020 570 960 590 870 635 780 635 700 632 660 590 610 548 590 600 540 660 480 710L400 772 370 850 385 970"
        stroke="#26c3e0"
        strokeWidth="9"
      />
      <path d="M160 1000C200 1005 240 970 260 930M420 1050C440 1100 400 1130 350 1140L330 1182M165 1010L210 1182" stroke="#26c3e0" strokeWidth="8" opacity=".8" />
      <path d="M620 590C670 640 680 740 675 790 690 830 680 860 700 895M800 945L900 975 1030 1020" stroke="#9fe4dc" strokeWidth="6" strokeDasharray="14 7" />
      <path d="M740 555C775 560 780 590 780 610M670 470l12 50" stroke="#b5e8e0" strokeWidth="7" />
      <path d="M330 890C350 980 400 1000 415 1070 400 1110 380 1120 360 1130" stroke="#9fe1d8" strokeWidth="26" opacity=".5" />
      <path d="M430 980l300 60M470 1050l240 60M400 1150l330-30M520 1010l60 120" stroke="#a9e8e0" strokeWidth="5" strokeDasharray="3 22" />
      <path d="M990 1015l30 8 20 20" stroke="#fff" strokeWidth="7" />
      <path d="M1036 1042h4" stroke="#d9e97c" strokeWidth="12" />
      <path d="M1780 1065C1850 1040 1900 1045 1960 1050M1960 1045L2060 1050" stroke="#2dc8e4" strokeWidth="9" />
    </g>
    <g filter="url(#soft)">
      <path d="M880 1040C820 1070 750 1060 690 1060M700 870L820 870 840 930M540 900l40-80" stroke="#8fdfd8" strokeWidth="22" opacity=".6" />
    </g>

    {/* land */}
    <g filter="url(#coast)" fill="#fdfdfd">
      <path d={ASIA} />
      <path d={JAPAN} />
      <g transform="translate(1305 0)">
        <path d={NORTH_AMERICA} />
        <path d={ISLANDS_NA} />
        <path d={GREENLAND} />
        <path d={EUROPE} />
        <path d={AFRICA} />
        <path d="M480 1015L520 1010 605 1045 590 1050 530 1030zM615 1045L665 1058 625 1065zM560 1190L620 1165 720 1190z" />
      </g>
    </g>
    <g filter="url(#relief)" opacity=".28">
      <path d={ASIA} fill="#000" />
      <path d={NORTH_AMERICA} transform="translate(1305 0)" fill="#000" />
      <path d={GREENLAND} transform="translate(1305 0)" fill="#000" />
    </g>

    {/* graticule */}
    <path d="M776 141V1182M1735 141V1182M2695 141V1182M776 299H950M1735 299H2600" stroke="#fff" strokeWidth="2.500" opacity=".3" />
    <path d="M778 150V338" stroke="#9c9496" strokeWidth="3" />
    <path d="M765 165L780 150 798 160 785 167z" fill="#fff" />

    {/* Alaska */}
    <g filter="url(#rough)">
      <path
        d="M1025 155L1080 180 1140 190 1190 210V447L1150 440 1138 428 1110 448 1085 440 1060 470 1020 508 985 533 1010 500 1022 472 970 470 940 440 930 400 980 370 978 342 930 347 908 320 945 300 985 295 950 270 920 240 958 215 965 190z"
        fill={GREEN}
        stroke="#f4fbee"
        strokeWidth="4"
      />
      <path d="M1190 449L1225 462 1250 470 1280 510 1305 545 1290 548 1262 505 1215 468zM870 370l25 8M915 450l15 0M940 558l25-12M1045 505l22-14" fill={GREEN} stroke="#f4fbee" strokeWidth="4" />
      <path d="M795 608l15-2M825 602l18-3M895 585l25-14M945 557l45-20M850 440h6" stroke="#fff" strokeWidth="7" />
    </g>
    <path d="M1188 210V447" stroke={GREEN} strokeWidth="6" />

    {/* contiguous states */}
    <g transform="translate(1305 0)" stroke="#fff" strokeWidth="3" strokeLinejoin="round">
      {STATES.map(([fill, points]) => (
        <polygon key={points} points={points} fill={fill} />
      ))}
    </g>
  </svg>
);

/* ---------- data ---------- */

const MENU = ["File", "Insert", "Format", "Tools", "Share", "View", "Window", "Help"];

const METRICS = [
  "All Students Enrolled Full…",
  "All Students Enrolled Part…",
  "All Students FT Enrollme…",
  "All Students Not Enrolled …",
  "All Students Not Enrolled …",
  "All Students PT Enrollme…",
  "Graduate Enrolled Full-Ti…",
  "Graduate Enrolled Part-Ti…",
  "Graduate Not Enrolled in …",
  "Graduate Not Enrolled in …",
  "Graduate PT Enrollment …",
  "Graduate Students FT En…",
  "Row Count - Web-Tables…",
  "Total Graduate Students",
  "Total Students",
  "Total Undergrad Students",
  "Undergrad Enrolled Full-…",
  "Undergrad Enrolled Part-…",
  "Undergrad Not Enrolled i…",
  "Undergrad Not Enrolled i…",
  "Undergrad PT Enrollment…",
  "Undergrad Students FT E…",
];

/* ---------- taskbar glyphs ---------- */

const WinLogo = () => (
  <Svg w={20} h={20}>
    <path d="M0 2.800 8 1.700V9.500H0zM9 1.500 20 0v9.500H9zM0 10.500h8v7.800L0 17.200zM9 10.500h11V20L9 18.500z" fill="#fff" />
  </Svg>
);
const Cortana = () => (
  <Svg w={28} h={28}>
    <circle cx="14" cy="14" r="12" stroke="#000" strokeWidth="3" />
  </Svg>
);
const Mic = () => (
  <Svg w={15} h={20}>
    <rect x="4" y=".7" width="7" height="13" rx="1" stroke="#333" strokeWidth="1.300" />
    <path d="M.8 10v3.500c0 2 1.500 3.200 3 3.200h7.400c1.500 0 3-1.200 3-3.200V10M7.500 17v2.500M4 19.300h7" stroke="#333" strokeWidth="1.300" />
  </Svg>
);
const TaskView = () => (
  <Svg w={21} h={20}>
    <path d="M1 0v3h12V0M1 20v-3h12v3M1 5.500h12v9H1zM18.500 0v4.500M18.500 11v9" stroke="#fff" strokeWidth="1.200" />
    <path d="M17 6h3v3.500h-3z" fill="#fff" />
  </Svg>
);
const Folder = () => (
  <Svg w={28} h={24}>
    <path d="M0 1.500C0 .7.6 0 1.500 0H11l2 2.500h15V23H0z" fill="#f7cf5f" />
    <path d="M0 5h28v18H0z" fill="#fde48f" />
    <path d="M6 24V15l2-2.500h12.500l2 2.500v9h-4.500v-5.500h-7.500V24z" fill="#3db3ea" />
  </Svg>
);
const Store = () => (
  <Svg w={29} h={29}>
    <path d="M9.500 8V6a5 5.500 0 0 1 10 0v2" stroke="#ddd" strokeWidth="1.500" />
    <path d="M0 7.500h29V28a1 1 0 0 1-1 1H1a1 1 0 0 1-1-1z" fill="#fff" />
    <path d="M8 12.500h6v5.500H8z" fill="#f25022" />
    <path d="M15 12.500h6v5.500h-6z" fill="#7fba00" />
    <path d="M8 19h6v5.500H8z" fill="#00a4ef" />
    <path d="M15 19h6v5.500h-6z" fill="#ffb900" />
  </Svg>
);
const Mail = () => (
  <Svg w={30} h={24}>
    <path d="M0 7.500 15 0l15 7.500V24H0z" fill="#fff" />
    <path d="M1.500 8h26L18 14l5 6z" fill="#1a1917" />
  </Svg>
);
const Snip = () => (
  <Svg w={28} h={29}>
    <ellipse cx="9" cy="16" rx="8.500" ry="5" fill="#9a9a9a" transform="rotate(-15 9 16)" />
    <ellipse cx="13.500" cy="9.500" rx="12" ry="7.500" fill="#fff" stroke="#d5353a" strokeWidth="2" transform="rotate(-28 13.500 9.500)" />
    <path d="M14 3l3 17M6 14l14 3" stroke="#8b9aa5" strokeWidth="1.500" />
    <ellipse cx="23" cy="18.500" rx="4" ry="2.800" stroke="#1b82d2" strokeWidth="2" transform="rotate(-20 23 18.500)" />
    <ellipse cx="17" cy="24" rx="2.800" ry="4" stroke="#1b82d2" strokeWidth="2" transform="rotate(20 17 24)" />
  </Svg>
);
const Studio = () => (
  <Svg w={26} h={29}>
    <circle cx="13" cy="13" r="12.500" fill="#79b94a" />
    <path d="M11.500 6.500h3V9h-3z" fill="#4d5e4f" />
    <circle cx="13" cy="11.500" r="3" stroke="#4d5e4f" strokeWidth="2.200" />
    <path d="M11.500 14.500 3.500 27.500M14.500 14.500 22.500 27.500" stroke="#e6e8e6" strokeWidth="3" />
    <path d="M5.500 20.500c4 3 11 3 15 0" stroke="#f5f5f5" strokeWidth="2" />
  </Svg>
);
const Edge = () => (
  <Svg w={26} h={27}>
    <path
      d="M0 12.500C1 5 6 0 13.500 0 20.500 0 25.500 5 25.500 12v3.500H8.500c.3 4 3.500 6 8 6 3 0 5.500-.8 7.500-2v5c-2.500 1.600-5.500 2.300-9 2.300C8 26.800 3 22.500 3 16c0-4 2-7.800 6-10C5 6.500 2 9 0 12.500zM8.700 11h9.500c0-3-1.500-5-4.500-5-3 0-4.500 2-5 5z"
      fill="#0c7ad8"
    />
  </Svg>
);
const Chrome = () => (
  <Svg w={28} h={28}>
    <circle cx="14" cy="14" r="14" fill="#fbcf3c" />
    <path d="M1.900 7A14 14 0 0 1 26.100 7H14a7 7 0 0 0-6 10.500z" fill="#de4f42" />
    <path d="M1.900 7A14 14 0 0 0 14 28l6-10.500a7 7 0 0 1-12.100 0z" fill="#1fa463" />
    <circle cx="14" cy="14" r="6.500" fill="#fff" />
    <circle cx="14" cy="14" r="5.200" fill="#4a8af4" />
  </Svg>
);
const Excel = () => (
  <Svg w={27} h={27}>
    <path d="M14 3.500h12.500v20H14z" fill="#fff" stroke="#1e7145" />
    <path d="M16 6.500h3.500M21 6.500h4M16 10h3.500M21 10h4M16 13.500h3.500M21 13.500h4M16 17h3.500M21 17h4M16 20.500h3.500M21 20.500h4" stroke="#1e7145" strokeWidth="2" />
    <path d="M0 3 16 0v27L0 24z" fill="#1e7145" />
    <path d="M4.500 8.500l6.500 10M11 8.500l-6.500 10" stroke="#fff" strokeWidth="2.200" />
  </Svg>
);
const MicroStrategy = () => (
  <Svg w={30} h={30}>
    <circle cx="15" cy="15" r="15" fill="#fff" />
    <path d="M7 8h4.500v14H7zM13 8h4.500v14H13zM19 8c3.500.5 4.500 2.500 4.500 5v9H19z" fill="#d9272e" />
  </Svg>
);
const People = () => (
  <Svg w={18} h={20}>
    <circle cx="12.500" cy="4" r="3" stroke="#fff" strokeWidth="1.400" />
    <circle cx="5.500" cy="11" r="3" stroke="#fff" strokeWidth="1.400" />
    <path d="M1 19.500c0-3 2-5 4.500-5s4.500 2 4.500 5M9 8.500c1-.8 2-1.200 3.500-1.200 2.500 0 4.500 2 4.500 5" stroke="#fff" strokeWidth="1.400" />
  </Svg>
);
const Battery = () => (
  <Svg w={20} h={12}>
    <path d="M.7.7h16.600v10.600H.7zM18 4h1.500v4H18" stroke="#fff" strokeWidth="1.200" />
    <path d="M3 3h11.500v6H3z" fill="#fff" />
  </Svg>
);
const Volume = () => (
  <Svg w={21} h={18}>
    <path d="M1 6h3l5-4.500v15L4 12H1z" stroke="#fff" strokeWidth="1.200" />
    <path d="M11.500 6.500c1.200 1.500 1.200 3.500 0 5M14.500 4.500c2.300 2.500 2.300 6.500 0 9" stroke="#fff" strokeWidth="1.200" />
    <path d="M17.300 1.500c3.600 4 3.600 11 0 15" stroke="#777" strokeWidth="1.200" />
  </Svg>
);
const Notice = () => (
  <Svg w={21} h={21}>
    <path d="M.7.7h19v15.500h-6.500l-3 3-3-3H.7z" stroke="#fff" strokeWidth="1.300" />
  </Svg>
);

/* ---------- app ---------- */

export default function App() {
  return (
    <>
      <GlobalStyle />
      <Screen>
        <AppWindow>
          <MenuBar>
            <MenuItems>
              {MENU.map((m) => (
                <span key={m}>{m}</span>
              ))}
            </MenuItems>
            <span>Online Education Data Wrangle</span>
            <WindowControls>
              <Svg w={15} h={15}>
                <path d="M0 13.500h15" stroke="#777" strokeWidth="1.200" />
              </Svg>
              <Svg w={15} h={15}>
                <path d="M1 4h9.500v10H1zM4 4V1h10v10h-3.500" stroke="#555" strokeWidth="1.200" />
              </Svg>
              <Svg w={15} h={15}>
                <path d="M0 0l15 15M15 0L0 15" stroke="#555" strokeWidth="1.200" />
              </Svg>
            </WindowControls>
          </MenuBar>

          <Toolbar>
            <ToolGroup>
              <Tool $w={24} $ml={21}><Undo /></Tool>
              <Tool $w={24} $ml={33}><Undo flip /></Tool>
              <Tool $w={24} $ml={35}><Save /></Tool>
              <Tool $w={24} $ml={35}><Refresh /></Tool>
              <Tool $w={24} $ml={32}><DbPause /></Tool>
              <ToolDivider $ml={23} />
              <Tool $w={24} $ml={26}><DbPlus /></Tool>
              <Tool $w={12} $ml={8}><Chevron c="#777" /></Tool>
              <Tool $w={24} $ml={30}><CopyPlus /></Tool>
              <Tool $w={24} $ml={33}><DocPlus /></Tool>
            </ToolGroup>
            <ToolGroup $ml={460}>
              <Tool $w={26}><ChartPlus /></Tool>
              <Tool $w={26} $ml={32}><FilterBox /></Tool>
              <Tool $w={26} $ml={29}><TextTool /></Tool>
              <Tool $w={26} $ml={30}><ImageTool /></Tool>
              <Tool $w={26} $ml={29}>
                <CodeTool />
                <HtmlLabel>HTML</HtmlLabel>
              </Tool>
            </ToolGroup>
            <ToolGroup $ml={480}>
              <Tool $w={26}><Bulb /></Tool>
              <Tool $w={28} $ml={31}><GroupTool /></Tool>
              <Tool $w={26} $ml={33}><FitTool /></Tool>
              <ToolDivider $ml={28} />
              <Tool $w={18} $ml={28}><Present /></Tool>
            </ToolGroup>
          </Toolbar>

          <Workspace>
            <Rail>
              <RailButton><ListIcon light /></RailButton>
              <RailButton><Db w={19} h={20} fill="#fff" /></RailButton>
              <RailButton><Pencil s={17} fill="#fff" /></RailButton>
              <RailButton><Funnel w={16} h={18} fill="#fff" /></RailButton>
              <RailButton><Gear s={19} fill="#fff" hole="#424347" /></RailButton>
              <RailButton><Bars w={19} h={16} fill="#fff" /></RailButton>
            </Rail>

            <Panel $w={219}>
              <PanelHead $pr={9}>
                <ListIcon />
                <PanelTitle>CONTENTS</PanelTitle>
                <Dots />
              </PanelHead>
              <Dossier>
                <Thumb><Books /></Thumb>
                <DossierInfo>
                  2 Chapters
                  <br />2 Pages
                </DossierInfo>
              </Dossier>
              <ChapterRow $mt={7}>
                <Caret />
                <span>State Education</span>
                <Dots />
              </ChapterRow>
              <PageRow $active>Online Education per State</PageRow>
              <ChapterRow $mt={15}>
                <Caret />
                <span>Institution</span>
                <Dots />
              </ChapterRow>
              <PageRow>Enrollment per Institution</PageRow>
            </Panel>

            <Panel $w={268}>
              <PanelHead $pr={13}>
                <Db w={15} h={15} fill="#3c3d41" />
                <PanelTitle $ml={9}>DATASETS</PanelTitle>
                <Dots />
              </PanelHead>
              <SearchBox>
                <span>All</span>
                <Chevron c="#777" />
                <Spring />
                <Magnifier />
              </SearchBox>
              <DatasetRow>
                <Caret />
                <span>Web-Tables-Enrollment-in-Di…</span>
                <Dots />
              </DatasetRow>
              <DatasetNote>In memory</DatasetNote>
              <FieldList>
                <FieldRow>
                  <FieldIcon><PinIcon /></FieldIcon>
                  Regions
                </FieldRow>
                <FieldRow>
                  <FieldIcon><FxIcon /></FieldIcon>
                  (Undergrad Students FT …
                </FieldRow>
                {METRICS.map((m, i) => (
                  <FieldRow key={i}>
                    <FieldIcon><MetricIcon /></FieldIcon>
                    {m}
                  </FieldRow>
                ))}
              </FieldList>
            </Panel>

            <Panel $w={215}>
              <Tabs>
                <EditorTab>
                  <Pencil s={14} fill="#3c3d41" />
                  <span>EDITOR</span>
                </EditorTab>
                <IconTab $w={39}><Funnel w={11} h={13} fill="#77797c" /></IconTab>
                <IconTab $w={36}><Gear s={13} fill="#77797c" hole="#dcdcdc" /></IconTab>
              </Tabs>
              <VizName>
                <span>Visualization 2</span>
                <Dots />
              </VizName>
              <EditorTools>
                <SwapIcon />
                <Sigma />
                <Eraser />
              </EditorTools>
              <DropZones>
                <DropZone>Rows</DropZone>
                <DropZone>Columns</DropZone>
                <DropZone>Metrics</DropZone>
              </DropZones>
            </Panel>

            <Canvas>
              <VizCard $h={439}>
                <VizTitle>Visualization 1</VizTitle>
                <MapArea>
                  <USMap />
                  <MapBar>
                    <MapTool $mr={23}>
                      <Svg w={20} h={18}>
                        <path d="M1 4.500V1h4M15 1h4v3.500M19 13.500V17h-4M5 17H1v-3.500M8.500 1h3.500M8.500 17h3.500M1 7.500v3M19 7.500v3" stroke="#55585a" strokeWidth="2" />
                      </Svg>
                    </MapTool>
                    <MapTool $mr={21}>
                      <Svg w={18} h={18}>
                        <circle cx="9" cy="9" r="7.300" stroke="#55585a" strokeWidth="2.400" strokeDasharray="3.700 2.030" />
                      </Svg>
                    </MapTool>
                    <MapTool $mr={22}>
                      <Svg w={19} h={17}>
                        <path d="M6.500 5.500A6.500 6.500 0 1 1 11.500 15.300c-2 0-3-1-3.500-2" stroke="#55585a" strokeWidth="2.200" strokeDasharray="3.500 1.900" />
                        <path d="M.5 10.500h4.500M1 14h4" stroke="#55585a" strokeWidth="1.900" />
                      </Svg>
                    </MapTool>
                    <MapTool $mr={24}>
                      <Svg w={18} h={18}>
                        <circle cx="5.500" cy="4.500" r="4.500" fill="#55585a" />
                        <path d="M5.500 8v8M3.500 16.500h4M10.500 10l5.500 6M16 10l-5.500 6" stroke="#55585a" strokeWidth="1.900" />
                      </Svg>
                    </MapTool>
                    <MapSearch>
                      Search...
                      <Magnifier s={16} />
                    </MapSearch>
                    <Layers />
                    <StylesLabel>STYLES</StylesLabel>
                    <Svg w={10} h={7}>
                      <path d="M1 .5h8L5 6z" fill="#999" stroke="#777" />
                    </Svg>
                  </MapBar>
                  <ZoomControl>
                    <div>+</div>
                    <div>−</div>
                  </ZoomControl>
                  <Credits>Sources: Esri, USGS, NOAA | Esri, HERE, Garmin, NG…</Credits>
                  <EsriMark>esri</EsriMark>
                </MapArea>
              </VizCard>

              <VizCard $h={457} $selected>
                <VizTitle>Visualization 2</VizTitle>
                <EmptyState>
                  <EmptyIcon><BigGrid /></EmptyIcon>
                  <EmptyTitle>Grid</EmptyTitle>
                  <EmptyHint>
                    Add 1 or more <Diamond />
                    attributes and/or 1 or more <MetricIcon />
                    metrics
                  </EmptyHint>
                </EmptyState>
              </VizCard>
            </Canvas>

            <Gallery>
              <PanelHead $pr={12} $pl={8} $ls={-0.1}>
                <Bars w={15} h={13} fill="#3c3d41" />
                <PanelTitle $ml={12}>GALLERY</PanelTitle>
                <Dots />
              </PanelHead>
              <GalleryLabel $h={51} $pt={16}>Built-in</GalleryLabel>
              <TileGrid>
                {BUILT_IN.map((Thumbnail, i) => (
                  <Tile key={i} $active={i === 0}>
                    <Thumbnail />
                  </Tile>
                ))}
              </TileGrid>
              <GalleryRule />
              <GalleryLabel $h={60} $pt={25}>Custom</GalleryLabel>
              <TileGrid>
                <Tile><CloudThumb /></Tile>
                <Tile><GanttThumb /></Tile>
                <Tile><SunThumb /></Tile>
                <Tile $dashed><BigPlus /></Tile>
              </TileGrid>
            </Gallery>
          </Workspace>
        </AppWindow>

        <Taskbar>
          <StartButton><WinLogo /></StartButton>
          <TaskSearch>
            <Cortana />
            <span>Type here to search</span>
            <Mic />
          </TaskSearch>
          <TaskApp $w={60}><TaskView /></TaskApp>
          <TaskApp $w={68}><Folder /></TaskApp>
          <TaskApp $w={55}><Store /></TaskApp>
          <TaskApp $w={70}><Mail /></TaskApp>
          <TaskApp $w={54}><Snip /></TaskApp>
          <TaskApp $w={70}><Studio /></TaskApp>
          <TaskApp $w={54}><Edge /></TaskApp>
          <TaskApp $w={51} $ml={9} $open><Chrome /></TaskApp>
          <TaskApp $w={51} $ml={11} $open><Excel /></TaskApp>
          <TaskApp $w={57} $ml={7} $open $active><MicroStrategy /></TaskApp>
          <Stacked />
          <Spring />
          <Tray>
            <TrayItem $w={18}><People /></TrayItem>
            <TrayItem $w={18} $ml={32}><Chevron w={16} h={9} c="#fff" s={1.300} up /></TrayItem>
            <TrayItem $w={20} $ml={22}><Battery /></TrayItem>
            <TrayItem $w={21} $ml={19}><Volume /></TrayItem>
            <TrayItem $w={40} $ml={11}>
              ENG
              <br />
              IN
            </TrayItem>
            <TrayItem $w={76} $ml={6}>
              11:39 AM
              <br />
              23-Apr-19
            </TrayItem>
            <TrayItem $w={21} $ml={21}><Notice /></TrayItem>
            <PeekEdge />
          </Tray>
        </Taskbar>
      </Screen>
    </>
  );
}
